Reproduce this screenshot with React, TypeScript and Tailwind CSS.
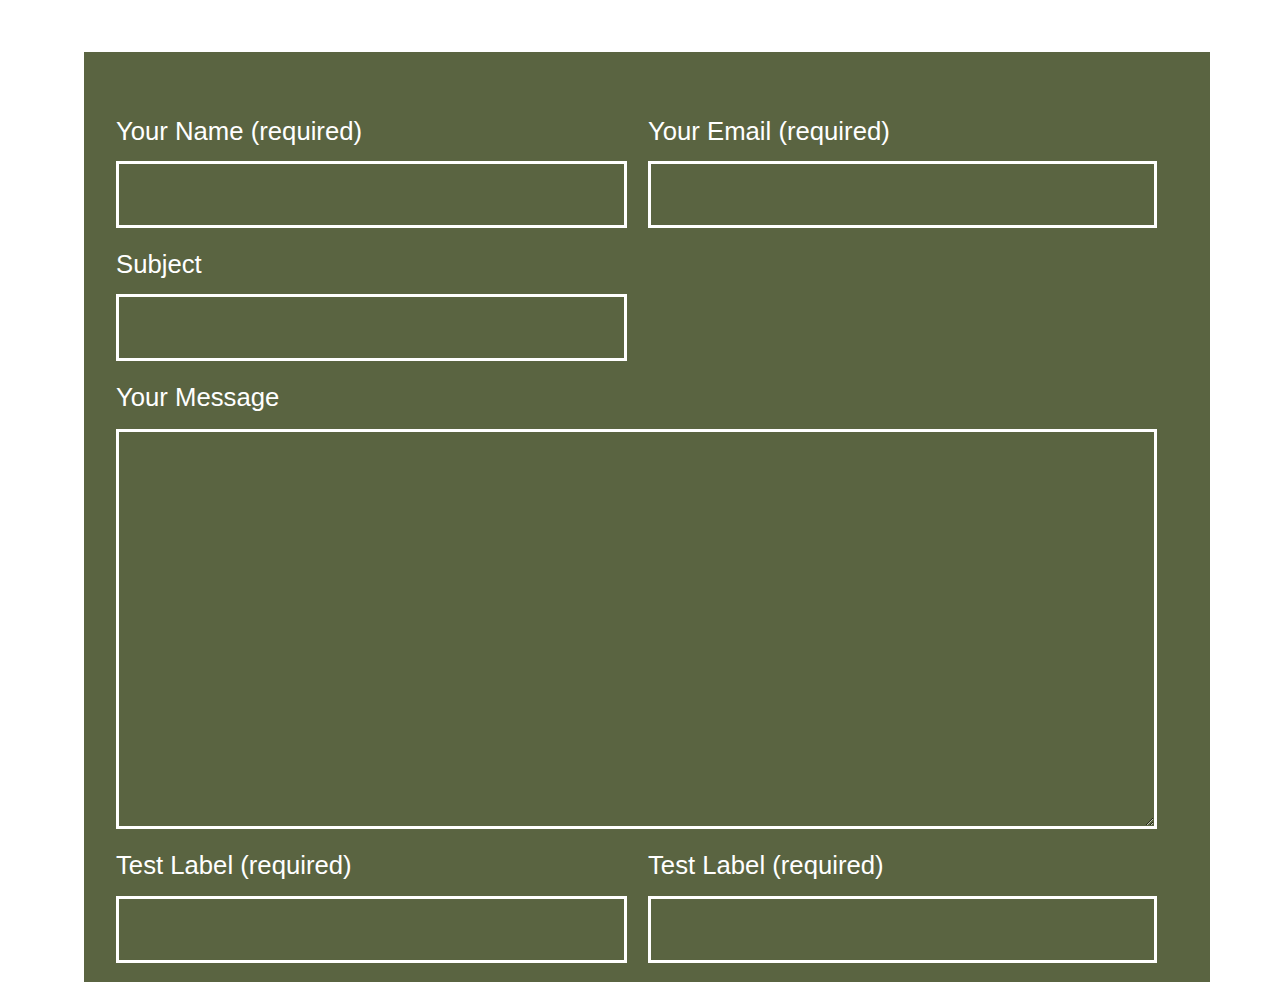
const Field = ({
  label,
  textarea,
  labelGap = "mb-[15px]",
}: {
  label: string;
  textarea?: boolean;
  labelGap?: string;
}) => (
  <div className="flex flex-col">
    <label className={`text-white text-[25.7px] leading-[30px] ${labelGap}`}>{label}</label>
    {textarea ? (
      <textarea className="block w-full h-[400px] border-[3px] border-white bg-transparent text-white outline-none p-3" />
    ) : (
      <input
        type="text"
        className="block w-full h-[67px] border-[3px] border-white bg-transparent text-white outline-none px-3"
      />
    )}
  </div>
);

export default function App() {
  return (
    <div
      className="min-h-screen bg-white pt-[52px] pl-[84px]"
      style={{ fontFamily: '"Liberation Sans", Arial, sans-serif' }}
    >
      <div className="w-[1126px] bg-[#5a6441] pt-[64px] pl-[32px] pb-[60px]">
        <form className="w-[1041px] flex flex-col">
          <div className="grid grid-cols-[511px_509px] gap-x-[21px]">
            <Field label="Your Name (required)" />
            <Field label="Your Email (required)" />
          </div>
          <div className="grid grid-cols-[511px_509px] gap-x-[21px] mt-[21px]">
            <Field label="Subject" />
          </div>
          <div className="mt-[21px]">
            <Field label="Your Message" textarea labelGap="mb-[17px]" />
          </div>
          <div className="grid grid-cols-[511px_509px] gap-x-[21px] mt-[21px]">
            <Field label="Test Label (required)" labelGap="mb-[16px]" />
            <Field label="Test Label (required)" labelGap="mb-[16px]" />
          </div>
        </form>
      </div>
    </div>
  );
}
